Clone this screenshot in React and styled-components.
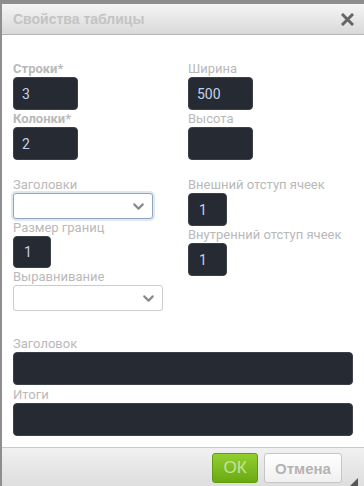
import styled, { createGlobalStyle } from 'styled-components';
import { ChevronDown } from 'lucide-react';

const GlobalStyle = createGlobalStyle`
  html, body {
    margin: 0;
    padding: 0;
    background: #8e8e8e;
  }
  * {
    box-sizing: border-box;
  }
`;

const Dialog = styled.div`
  margin: 4px 0 0 2px;
  height: 482px;
  display: flex;
  flex-direction: column;
  background: #ffffff;
  font-family: Roboto, "Liberation Sans", sans-serif;
`;

const Header = styled.div`
  height: 31px;
  display: flex;
  align-items: center;
  justify-content: space-between;
  padding: 0 10px 0 11px;
  background: linear-gradient(#f5f5f5, #d9d9d9);
  border-bottom: 1px solid #b4b4b4;
`;

const Title = styled.div`
  font-family: "Liberation Sans", Arial, sans-serif;
  font-weight: 700;
  font-size: 14px;
  color: #c3c3c3;
`;

const CloseButton = styled.div`
  width: 14px;
  height: 14px;
  display: flex;
  align-items: center;
  justify-content: center;
  cursor: pointer;
`;

const Body = styled.div`
  flex: 1;
  padding: 25px 11px 11px 11px;
  display: flex;
  flex-direction: column;
`;

const Columns = styled.div`
  display: grid;
  grid-template-columns: 175px 1fr;
`;

const Column = styled.div`
  display: flex;
  flex-direction: column;
  align-items: flex-start;
`;

const Spacer = styled.div`
  height: ${p => p.$h}px;
  flex-shrink: 0;
`;

const Label = styled.label`
  display: block;
  height: 17px;
  line-height: 17px;
  font-size: 13px;
  font-weight: ${p => (p.$bold ? 700 : 400)};
  color: #b9b9b9;
  white-space: nowrap;
`;

const TextInput = styled.div`
  width: ${p => p.$w}px;
  height: ${p => p.$h || 33}px;
  background: #262a33;
  border: 1px solid #3b4049;
  border-radius: 4px;
  display: flex;
  align-items: center;
  padding-left: ${p => p.$pad || 8}px;
  font-size: 14px;
  color: #c6d1ea;
`;

const Select = styled.div`
  width: ${p => p.$w}px;
  height: 26px;
  background: #ffffff;
  border: 1px solid ${p => (p.$focus ? '#8fa6c2' : '#cbcbcb')};
  border-radius: 3px;
  box-shadow: ${p => (p.$focus ? '0 0 0 2px #dfe7ef' : 'none')};
  display: flex;
  align-items: center;
  justify-content: flex-end;
  padding-right: 5px;
`;

const FullWidth = styled.div`
  margin-top: 24px;
  display: flex;
  flex-direction: column;
`;

const Footer = styled.div`
  height: 39px;
  border-top: 1px solid #c9c9c9;
  background: linear-gradient(#f1f1f1, #dedede);
  display: flex;
  align-items: center;
  justify-content: flex-end;
  padding: 4px 6px 2px 0;
  gap: 6px;
`;

const Button = styled.button`
  height: 30px;
  width: ${p => p.$w}px;
  border-radius: 3px;
  font-family: "Liberation Sans", Arial, sans-serif;
  font-size: ${p => (p.$primary ? 17 : 15)}px;
  padding: 0;
  cursor: pointer;
  border: 1px solid ${p => (p.$primary ? '#5f9c12' : '#c6c6c6')};
  background: ${p =>
    p.$primary
      ? 'linear-gradient(#92cf2f, #6aa912)'
      : 'linear-gradient(#ffffff, #f0f0f0)'};
  color: ${p => (p.$primary ? '#c4e2a0' : '#b3b3b3')};
  font-weight: ${p => (p.$primary ? 400 : 700)};
`;

const Grip = styled.div`
  width: 10px;
  height: 10px;
  align-self: flex-end;
  margin-left: 0;
  margin-bottom: 1px;
`;

const Field = ({ label, bold, w, value }) => (
  <>
    <Label $bold={bold}>{label}</Label>
    <TextInput $w={w}>{value}</TextInput>
  </>
);

const Dropdown = ({ w, focus }) => (
  <Select $w={w} $focus={focus}>
    <ChevronDown size={17} strokeWidth={3} color="#8a8a8a" />
  </Select>
);

export default function App() {
  return (
    <>
      <GlobalStyle />
      <Dialog>
        <Header>
          <Title>Свойства таблицы</Title>
          <CloseButton>
            <svg width="13" height="13" viewBox="0 0 13 13">
              <path d="M2 2 L11 11 M11 2 L2 11" stroke="#666666" strokeWidth="3" strokeLinecap="square" />
            </svg>
          </CloseButton>
        </Header>
        <Body>
          <Columns>
            <Column>
              <Field label="Строки*" bold w={65} value="3" />
              <Field label="Колонки*" bold w={65} value="2" />
              <Spacer $h={16} />
              <Label>Заголовки</Label>
              <Dropdown w={140} focus />
              <Label>Размер границ</Label>
              <TextInput $w={38} $h={32} $pad={10}>1</TextInput>
              <Label>Выравнивание</Label>
              <Dropdown w={150} />
            </Column>
            <Column>
              <Field label="Ширина" w={65} value="500" />
              <Field label="Высота" w={65} value="" />
              <Spacer $h={16} />
              <Label>Внешний отступ ячеек</Label>
              <TextInput $w={39} $pad={10}>1</TextInput>
              <Label>Внутренний отступ ячеек</Label>
              <TextInput $w={39} $pad={10}>1</TextInput>
            </Column>
          </Columns>
          <FullWidth>
            <Label>Заголовок</Label>
            <TextInput $w={340} />
            <Spacer $h={1} />
            <Label>Итоги</Label>
            <TextInput $w={340} />
          </FullWidth>
        </Body>
        <Footer>
          <Button $primary $w={46}>ОК</Button>
          <Button $w={78}>Отмена</Button>
          <Grip>
            <svg width="10" height="10" viewBox="0 0 10 10">
              <polygon points="10,0 10,10 0,10" fill="#555" />
            </svg>
          </Grip>
        </Footer>
      </Dialog>
    </>
  );
}
